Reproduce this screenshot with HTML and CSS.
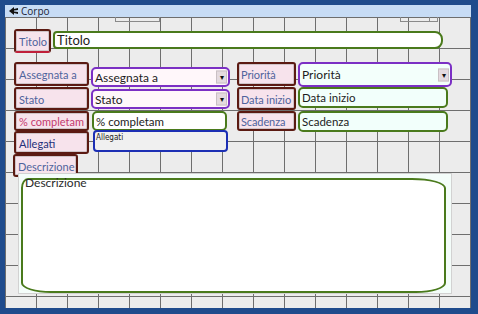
FILE: index.html
```html
<!DOCTYPE html>
<html lang="it">
<head>
  <meta charset="UTF-8" />
  <title>Corpo</title>
  <link rel="stylesheet" href="styles.css">
</head>
<body>
  <div class="window">

    <!-- section header -->
    <div class="section-bar">
      <svg class="sec-icon" width="9" height="8" viewBox="0 0 9 8">
        <path d="M0 4 L5 0 L5 2 L9 1 L9 3 L5 3.5 L5 4.5 L9 5 L9 7 L5 6 L5 8 Z" fill="#111"/>
      </svg>
      <span>Corpo</span>
    </div>

    <!-- design grid -->
    <div class="canvas">
      <div class="ruler">
        <span class="tick t1"></span><span class="tick t2"></span><span class="tick t3"></span>
      </div>

      <div class="row-title">
        <div class="lbl lbl-title">Titolo</div>
        <div class="txt txt-title">Titolo</div>
      </div>

      <div class="fields">
        <div class="lbl c1 r1">Assegnata a</div>
        <div class="combo c3 r1 combo-a">Assegnata a<span class="drop">&#9662;</span></div>
        <div class="lbl c5 r1">Priorità</div>
        <div class="combo c7 r1 combo-p">Priorità<span class="drop">&#9662;</span></div>

        <div class="lbl c1 r2">Stato</div>
        <div class="combo c3 r2 combo-s">Stato<span class="drop">&#9662;</span></div>
        <div class="lbl c5 r2">Data inizio</div>
        <div class="txt c7 r2 txt-r">Data inizio</div>

        <div class="lbl c1 r3 lbl-pink">% completam</div>
        <div class="txt c3 r3 txt-l">% completam</div>
        <div class="lbl c5 r3">Scadenza</div>
        <div class="txt c7 r3 txt-r">Scadenza</div>

        <div class="lbl c1 r4 lbl-navy">Allegati</div>
        <div class="attach c3 r4">Allegati</div>
      </div>

      <div class="lbl lbl-desc">Descrizione</div>

      <div class="memo-frame">
        <div class="memo">Descrizione</div>
      </div>
    </div>

  </div>
</body>
</html>
```

FILE: styles.css
```css
* { margin: 0; padding: 0; box-sizing: border-box; }
body {
  font-family: Lato, 'Open Sans', sans-serif;
  background: #1f4b8c;
  width: 478px;
  height: 314px;
  overflow: hidden;
}

.window {
  width: 478px;
  height: 314px;
  border-top: 5px solid #1f4b8c;
  border-left: 5px solid #1f4b8c;
  border-right: 7px solid #1f4b8c;
  border-bottom: 6px solid #1f4b8c;
  background: #ececec;
}

.section-bar {
  height: 12px;
  background: #c7dcf5;
  display: flex;
  align-items: center;
  padding-left: 4px;
  font-family: 'Open Sans', sans-serif;
  font-size: 10px;
  color: #1b2437;
  line-height: 12px;
}
.sec-icon { margin-right: 3px; }

.canvas {
  position: relative;
  height: 291px;
  padding: 12px 0 0 9px;
  background-color: #ececec;
  background-image:
    linear-gradient(to right, #6e6e6e 1px, transparent 1px),
    linear-gradient(to bottom, #6e6e6e 1px, transparent 1px);
  background-size: 31px 31px;
}

/* small tab markers along the top edge */
.ruler { position: absolute; top: 0; left: 0; right: 0; height: 6px; }
.tick { position: absolute; top: 0; height: 5px; border: 1px solid #8a8a8a; border-top: none; }
.t1 { left: 110px; width: 45px; }
.t2 { left: 395px; width: 30px; }
.t3 { left: 425px; width: 8px; border-left: none; }

/* labels */
.lbl {
  border: 2px solid #5b1a12;
  border-radius: 3px;
  background: #f7e3ec;
  box-shadow: inset 0 0 0 1px #cfc4c8;
  color: #4f639c;
  font-size: 11px;
  padding: 1px 3px 0;
  white-space: nowrap;
  overflow: hidden;
  display: flex;
  align-items: center;
}
.lbl-pink { color: #c43a6e; }
.lbl-navy { color: #24307a; }

/* text boxes */
.txt {
  border: 2px solid #4a7a1c;
  border-radius: 5px;
  background: #f2fffb;
  color: #1c1c1c;
  font-size: 11.5px;
  padding: 0 2px;
  display: flex;
  align-items: center;
  white-space: nowrap;
  overflow: hidden;
}

/* title row */
.row-title { display: flex; align-items: flex-start; height: 33px; }
.lbl-title { width: 37px; height: 24px; border-bottom-color: #c0203a; flex: none; }
.txt-title {
  width: 390px;
  height: 18px;
  margin: 2px 0 0 2px;
  border-radius: 4px 8px 8px 4px;
  background: #fff;
  font-size: 13px;
  flex: none;
}

/* field block: label | control | label | control */
.fields {
  display: grid;
  grid-template-columns: 75px 2px 139px 7px 59px 2px 154px;
  grid-template-rows: 25px 24px 20px 23px;
  align-items: start;
}
.c1 { grid-column: 1; }
.c3 { grid-column: 3; }
.c5 { grid-column: 5; }
.c7 { grid-column: 7; }
.r1 { grid-row: 1; }
.r2 { grid-row: 2; }
.r3 { grid-row: 3; }
.r4 { grid-row: 4; }

.fields .lbl { height: 24px; }
.fields .r2.lbl, .fields .r4.lbl { height: 23px; }
.fields .r3.lbl { height: 20px; }
.fields .c5 { padding: 1px 2px 0; letter-spacing: -0.1px; }

.combo {
  position: relative;
  border: 2px solid #7b30c4;
  border-radius: 5px;
  background: #fff7fa;
  color: #1c1c1c;
  font-size: 12px;
  padding: 0 2px;
  display: flex;
  align-items: center;
  white-space: nowrap;
}
.combo-a { height: 20px; margin-top: 5px; }
.combo-s { height: 20px; margin-top: 2px; }
.combo-p { height: 25px; background: #f3fffb; }
.drop {
  position: absolute;
  right: 1px;
  top: 50%;
  transform: translateY(-50%);
  width: 11px;
  height: 13px;
  background: #e4dadf;
  border: 1px solid #c9c0c4;
  font-size: 8px;
  line-height: 11px;
  text-align: center;
  color: #111;
}

.txt-l { width: 135px; height: 20px; margin-left: 1px; background: #fff; }
.txt-r { width: 150px; height: 21px; }

.attach {
  width: 135px;
  height: 22px;
  margin: -1px 0 0 2px;
  border: 2px solid #1c2fb4;
  border-radius: 4px;
  background: #f0f0f0;
  color: #222;
  font-family: 'Liberation Sans Narrow', 'DejaVu Sans Condensed', sans-serif;
  font-size: 8px;
  padding: 1px;
  line-height: 10px;
}

/* memo */
.lbl-desc { width: 65px; height: 23px; margin-left: -1px; }
.memo-frame {
  width: 434px;
  height: 121px;
  margin: -4px 0 0 4px;
  background: #f4fdfa;
  border: 1px solid #d2d2d2;
  padding: 1px 0 0 2px;
}
.memo {
  width: 425px;
  height: 115px;
  margin-top: 3px;
  border: 2px solid #4a7a1c;
  border-radius: 7px 34px 30px 30px / 10px 10px 10px 10px;
  background: #fff;
  color: #2a2a2a;
  font-size: 12px;
  line-height: 6px;
  padding-left: 2px;
}
```
